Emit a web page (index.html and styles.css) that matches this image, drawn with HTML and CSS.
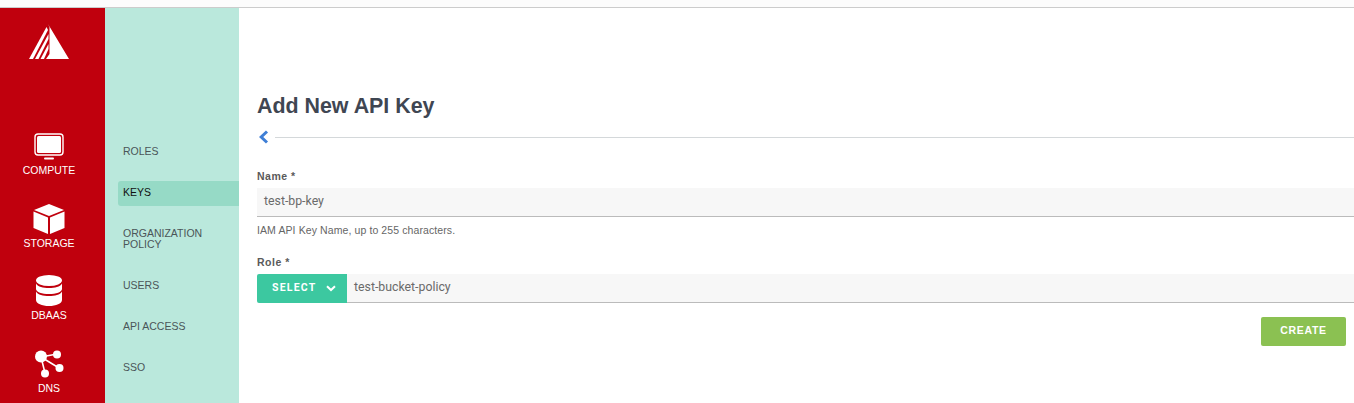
FILE: index.html
```html
<!DOCTYPE html>
<html lang="en">
<head>
    <meta charset="UTF-8">
    <title>Add New API Key</title>
    <meta name="viewport" content="width=device-width, initial-scale=1">
    <link rel="stylesheet" href="styles.css">
</head>
<body>
    <div class="topbar"></div>
    <div class="layout">
        <nav class="rail">
            <div class="logo">
                <svg width="40" height="36" viewBox="0 0 40 36">
                    <path fill="#fff" d="M19 0 L40 35 L17 35 L20.500 30 L20.500 3 Z"/>
                    <path fill="#fff" d="M17.500 3 L19 6 L4 35 L0 35 Z"/>
                    <path fill="#fff" d="M19.500 10 L19.500 15 L9.500 35 L6 35 Z"/>
                    <path fill="#fff" d="M19.500 20 L19.500 25 L15 35 L11.500 35 Z"/>
                </svg>
            </div>
            <a class="rail-item">
                <svg width="30" height="28" viewBox="0 0 30 28">
                    <rect x="1" y="1" width="28" height="21" rx="3" fill="none" stroke="#fff" stroke-width="1.400"/>
                    <rect x="3" y="3" width="24" height="17" rx="1.500" fill="#fff"/>
                    <rect x="10" y="24.500" width="10" height="2" rx="1" fill="#fff"/>
                </svg>
                <span>COMPUTE</span>
            </a>
            <a class="rail-item">
                <svg width="32" height="30" viewBox="0 0 32 30">
                    <path fill="#fff" d="M16 0 L31 6 L16 12 L1 6 Z"/>
                    <path fill="#fff" d="M0.500 7.500 L15 13.500 L15 30 L0.500 24 Z"/>
                    <path fill="#fff" d="M31.500 7.500 L17 13.500 L17 30 L31.500 24 Z"/>
                </svg>
                <span>STORAGE</span>
            </a>
            <a class="rail-item short">
                <svg width="28" height="31" viewBox="0 0 28 31">
                    <ellipse cx="14" cy="5.500" rx="13" ry="5.500" fill="#fff"/>
                    <path fill="#fff" d="M1 8.500 C3 12 8 13 14 13 C20 13 25 12 27 8.500 L27 14 C27 17 21 19 14 19 C7 19 1 17 1 14 Z"/>
                    <path fill="#fff" d="M1 16.500 C3 20 8 21 14 21 C20 21 25 20 27 16.500 L27 25 C27 28.500 21 31 14 31 C7 31 1 28.500 1 25 Z"/>
                </svg>
                <span>DBAAS</span>
            </a>
            <a class="rail-item">
                <svg width="30" height="29" viewBox="0 0 30 29">
                    <g stroke="#fff" stroke-width="1.500">
                        <line x1="7" y1="7" x2="23" y2="4"/>
                        <line x1="7" y1="7" x2="25" y2="18"/>
                        <line x1="7" y1="7" x2="11" y2="23"/>
                    </g>
                    <g fill="#fff">
                        <circle cx="7" cy="6.500" r="6"/>
                        <circle cx="23" cy="4.500" r="4"/>
                        <circle cx="25.500" cy="18" r="4"/>
                        <circle cx="11" cy="23.500" r="4"/>
                    </g>
                </svg>
                <span>DNS</span>
            </a>
        </nav>
        <aside class="subnav">
            <a class="subnav-item">ROLES</a>
            <a class="subnav-item active">KEYS</a>
            <a class="subnav-item tall">ORGANIZATION POLICY</a>
            <a class="subnav-item">USERS</a>
            <a class="subnav-item">API ACCESS</a>
            <a class="subnav-item">SSO</a>
        </aside>
        <main class="content">
            <h1>Add New API Key</h1>
            <div class="back-row">
                <svg width="12" height="14" viewBox="0 0 12 14">
                    <path d="M10 1.500 L4.200 7 L10 12.500" fill="none" stroke="#3f7fd6" stroke-width="3"/>
                </svg>
                <div class="back-line"></div>
            </div>
            <form class="form" autocomplete="off">
                <label class="field-label">Name *</label>
                <div class="input">test-bp-key</div>
                <p class="hint">IAM API Key Name, up to 255 characters.</p>
                <label class="field-label">Role *</label>
                <div class="select-row">
                    <button type="button" class="select-btn">
                        <span>SELECT</span>
                        <svg width="10" height="7" viewBox="0 0 10 7">
                            <path d="M1 1.200 L5 5 L9 1.200" fill="none" stroke="#fff" stroke-width="2"/>
                        </svg>
                    </button>
                    <div class="input select-value">test-bucket-policy</div>
                </div>
                <div class="actions">
                    <button type="button" class="create-btn">CREATE</button>
                </div>
            </form>
        </main>
    </div>
</body>
</html>
```

FILE: styles.css
```css
html, body {
    height: 100%;
}
body {
    font-family: "Liberation Sans", Arial, sans-serif;
    background: #fff;
    margin: 0;
    padding: 0;
    overflow: hidden;
    display: flex;
    flex-direction: column;
}
.topbar {
    height: 7px;
    background: #fcfcfc;
    border-bottom: 1px solid #ccc;
    flex-shrink: 0;
}
.layout {
    display: flex;
    flex: 1;
    min-height: 0;
}
.rail {
    width: 105px;
    box-sizing: border-box;
    padding-right: 7px;
    flex-shrink: 0;
    background: #c0000d;
    color: #fff;
    display: flex;
    flex-direction: column;
    align-items: center;
}
.logo {
    height: 36px;
    margin-top: 16px;
    margin-bottom: 43px;
}
.rail-item {
    height: 73px;
    display: flex;
    flex-direction: column;
    align-items: center;
    justify-content: flex-end;
    font-size: 10.500px;
    flex-shrink: 0;
}
.rail-item.short {
    height: 72px;
}
.rail-item span {
    line-height: 12px;
    margin-top: 3px;
}
.subnav {
    width: 134px;
    flex-shrink: 0;
    background: #bae8dc;
    padding-top: 131px;
    box-sizing: border-box;
}
.subnav-item {
    display: flex;
    align-items: center;
    height: 25px;
    margin: 0 0 16px 13px;
    padding-left: 5px;
    font-size: 10.500px;
    line-height: 11px;
    color: #4a5558;
}
.subnav-item.active {
    box-sizing: border-box;
    margin-top: 17px;
    padding-bottom: 2px;
    background: #96dac6;
    color: #111;
    border-radius: 3px 0 0 3px;
}
.subnav-item.tall {
    box-sizing: border-box;
    height: 35px;
    padding-bottom: 2px;
}
.content {
    flex: 1;
    min-width: 0;
    padding: 85px 8px 0 18px;
}
h1 {
    margin: 0;
    font-size: 21.400px;
    line-height: 26px;
    font-weight: bold;
    color: #3f4652;
}
.back-row {
    display: flex;
    align-items: center;
    gap: 6px;
    margin: 11px -8px 0 0;
    height: 14px;
}
.back-line {
    flex: 1;
    height: 1px;
    background: #d4d8da;
}
.form {
    margin-top: 26px;
}
.field-label {
    display: block;
    font-size: 10.500px;
    font-weight: bold;
    line-height: 12px;
    color: #5a5a5a;
    letter-spacing: .5px;
}
.input {
    font-family: Roboto, sans-serif;
    font-size: 12.300px;
    color: #6a6a6a;
    background: #f7f7f7;
    border-bottom: 1px solid #bbb;
    height: 28px;
    line-height: 26px;
    padding-left: 7px;
    margin: 6px -8px 0 0;
}
.hint {
    font-size: 10.500px;
    line-height: 12px;
    color: #666;
    letter-spacing: .1px;
    margin: 7px 0 0 0;
}
.hint + .field-label {
    margin-top: 20px;
}
.select-row {
    display: flex;
    margin-top: 6px;
}
.select-row .input {
    flex: 1;
    margin-top: 0;
}
.select-btn {
    width: 90px;
    height: 29px;
    flex-shrink: 0;
    background: #3cc8a0;
    color: #fff;
    border: none;
    border-radius: 2px 0 0 2px;
    font-family: Roboto, sans-serif;
    font-size: 10.500px;
    font-weight: bold;
    letter-spacing: 1.200px;
    display: flex;
    align-items: center;
    padding: 0 0 0 15px;
    gap: 10px;
}
.select-btn span {
    margin-top: -2px;
}
.actions {
    display: flex;
    justify-content: flex-end;
    margin-top: 14px;
}
.create-btn {
    width: 85px;
    height: 29px;
    padding: 0 0 3px 0;
    background: #8bc152;
    color: #fff;
    border: none;
    border-radius: 2px;
    font-family: "Liberation Sans", Arial, sans-serif;
    font-size: 10.500px;
    font-weight: bold;
    letter-spacing: .7px;
}
```
